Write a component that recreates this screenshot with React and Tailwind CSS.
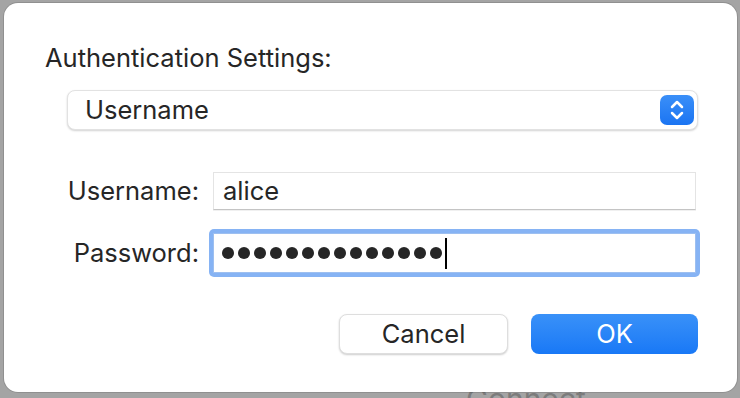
import React from "react";

const font = { fontFamily: "Inter, 'Liberation Sans', sans-serif" };

export default function App() {
  const dots = Array.from({ length: 14 });
  return (
    <div className="relative w-[740px] h-[398px] overflow-hidden bg-[#a4a4a4]" style={font}>
      <div className="absolute left-[466px] top-[381px] text-[30px] leading-[36px] text-[#7c7c7c]">Connect</div>
      <div className="relative ml-[4px] mt-[3px] w-[733px] h-[389px] rounded-[14px] bg-white shadow-[0_0_0_1px_rgba(0,0,0,0.12)] pt-[40px] flex flex-col text-[#262626]">
        <div className="ml-[41px] text-[25.5px] leading-[30px]">Authentication Settings:</div>
        <div className="ml-[63px] mt-[17px] w-[631px] h-[40px] rounded-[8px] bg-white border border-[#e2e2e2] shadow-[0_1px_2px_rgba(0,0,0,0.18)] flex items-center justify-between pl-[17px] pr-[3px]">
          <span className="text-[25.5px] leading-[30px]">Username</span>
          <div className="w-[34px] h-[30px] rounded-[7px] bg-gradient-to-b from-[#3a8ff8] to-[#1a74f2] flex items-center justify-center">
            <svg width="16" height="24" viewBox="0 0 16 24" fill="none" stroke="white" strokeWidth="2.5" strokeLinecap="round" strokeLinejoin="round">
              <path d="M3 9 L8 4 L13 9" />
              <path d="M3 15 L8 20 L13 15" />
            </svg>
          </div>
        </div>
        <div className="mt-[42px] flex items-center">
          <div className="w-[195px] text-right text-[25.5px] leading-[30px]">Username:</div>
          <div className="ml-[14px] w-[483px] h-[38px] border border-[#e4e4e4] border-b-[#c4c4c4] shadow-[0_1px_0_rgba(0,0,0,0.06)] flex items-center pl-[9px] text-[25.5px] leading-[30px]">
            alice
          </div>
        </div>
        <div className="mt-[19px] flex items-center">
          <div className="w-[195px] text-right text-[25.5px] leading-[30px]">Password:</div>
          <div className="ml-[10px] w-[491px] h-[48px] rounded-[5px] bg-[#86b3f4] p-[4px]">
            <div className="w-full h-full bg-white border border-[#9dbff0] flex items-center pl-[8px]">
              <div className="flex items-center gap-[4px]">
                {dots.map((_, i) => (
                  <span key={i} className="block w-[12px] h-[12px] rounded-full bg-[#262626]" />
                ))}
              </div>
              <span className="block ml-[3px] w-[2px] h-[31px] bg-black" />
            </div>
          </div>
        </div>
        <div className="mt-[37px] flex justify-end pr-[39px] gap-[23px]">
          <button className="w-[169px] h-[40px] rounded-[8px] bg-white border border-[#dedede] shadow-[0_1px_2px_rgba(0,0,0,0.2)] text-[25.5px] leading-[30px] text-[#262626]">
            Cancel
          </button>
          <button className="w-[167px] h-[40px] rounded-[8px] bg-gradient-to-b from-[#3991f8] to-[#1878f6] text-[25.5px] leading-[30px] text-white">
            OK
          </button>
        </div>
      </div>
    </div>
  );
}
